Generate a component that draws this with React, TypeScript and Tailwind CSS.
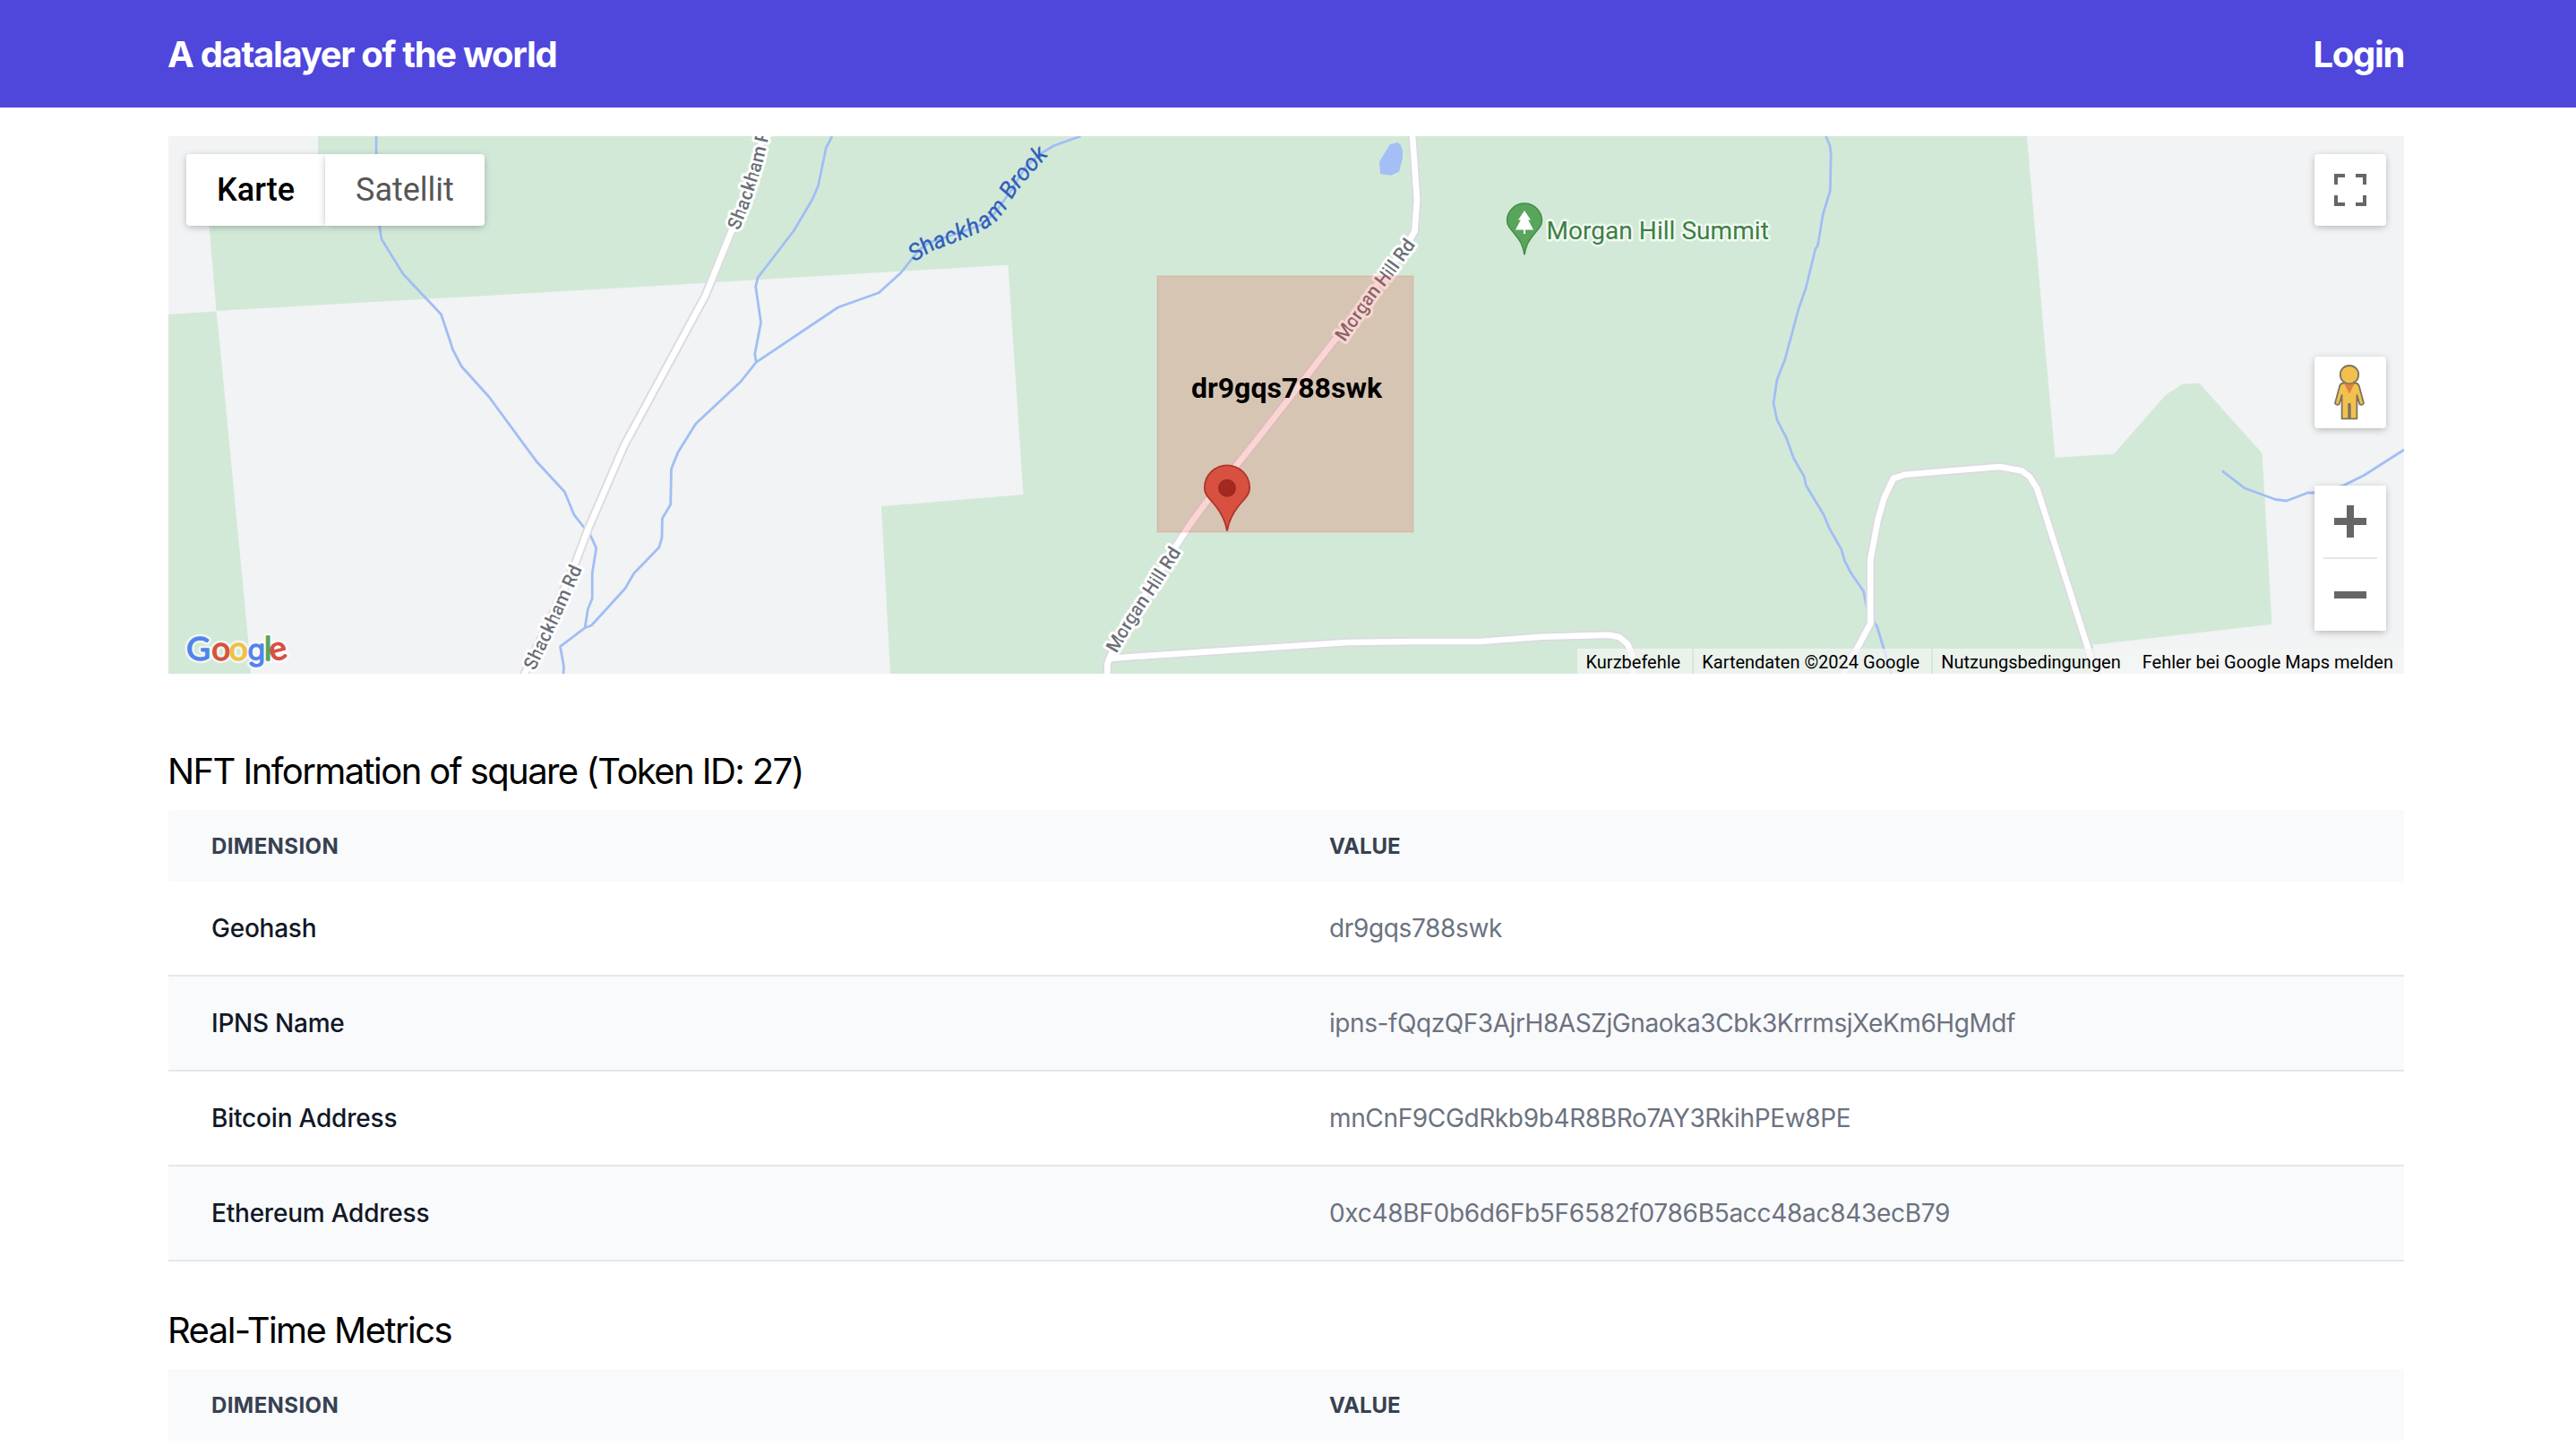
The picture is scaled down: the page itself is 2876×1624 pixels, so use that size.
import React from "react";

type Row = { name: string; value: string; nameClass: string; valueClass: string };

const nftRows: Row[] = [
  {
    name: "Geohash",
    value: "dr9gqs788swk",
    nameClass: "tracking-[-0.24px]",
    valueClass: "tracking-[-0.36px]",
  },
  {
    name: "IPNS Name",
    value: "ipns-fQqzQF3AjrH8ASZjGnaoka3Cbk3KrrmsjXeKm6HgMdf",
    nameClass: "tracking-[-0.24px]",
    valueClass: "tracking-[-0.42px]",
  },
  {
    name: "Bitcoin Address",
    value: "mnCnF9CGdRkb9b4R8BRo7AY3RkihPEw8PE",
    nameClass: "tracking-[-0.2px]",
    valueClass: "tracking-[-0.36px]",
  },
  {
    name: "Ethereum Address",
    value: "0xc48BF0b6d6Fb5F6582f0786B5acc48ac843ecB79",
    nameClass: "tracking-[-0.22px]",
    valueClass: "tracking-[-0.29px]",
  },
];

const forest = [
  "M188 351 L241.5 347.5 L245 380 L277 713 L280 752 H188 Z",
  "M355 152 V215 L231.5 222 L233.5 252 L241.5 347 L700 321 L1125.5 295.7 L1131 380 L1142.5 552 L1094 556 L984 565 L994 752 H2345 L2336.6 719.7 L2536.5 696.7 L2525.6 506 L2455.5 427.7 L2436.5 428.7 L2418 440.7 L2360 506.7 L2294.5 510.7 L2282.6 380 L2263 152 Z",
];

const streams = [
  "M420 152 L420 200 L423.7 252 L426 267 L450 305.7 L492.4 350.7 L502.3 380 L505.4 390 L515.3 409 L546 443 L598.7 514.7 L630.4 549 L641 574.7 L653 590 L659 597 L665.7 611.7 L661.2 640 V668 L656.3 680 L653.2 700",
  "M1206.7 152 L1176.8 162.5 L1164.3 170 L1146 185 L1128.6 213 L1110.7 238 L1095 251 L1070.5 260 L1037 271 L1026 279 L1018 289 L1005.8 304.5 L981.2 326.7 L935.7 343 L844.2 404.3 L827 426 L776.8 473 L757 504.7 L749.5 523.3 L748.7 563 L739.4 578.7 L739 600 L735.8 611 L707.7 640 L698 656.7 L660.4 698 L653.2 700.7 L625.5 721.7 L629.5 744 L629 752",
  "M929 152 L922.3 165 L913.4 207.7 L906.7 223 L886.6 257 L846 310 L843.7 320 L849.5 360 L842.8 395 L844.2 404",
  "M2038.4 152 L2042.9 162 L2044.2 172 L2043.3 213 L2035.3 239 L2029.5 274 L2026.8 278 L2016 322 L2008 345 L1992.9 401 L1984 423.7 L1980 450 L1984 468.7 L1995 490 L2002.3 511 L2014.3 532 L2016.3 541.7 L2036.2 574.7 L2042 589 L2055.7 613 L2059.5 626 L2066.8 640 L2080.6 660 L2085 682 L2092.8 694.7 L2095.5 699 L2103.5 725 L2111.6 752",
  "M2481 525.7 L2505.8 544.7 L2540.5 557.5 L2552.8 559 L2576.6 550 H2584 L2616.2 542 L2639.4 530.5 L2684 502",
];

const roads = [
  "M856 140 L851.8 152 L842 190 L829.5 225 L817 257 L787.5 330 L760.4 380 L697 497 L656.8 590 L640.7 633 L615 690 L592 738 L584 756",
  "M1576.8 148 L1582 223 L1579.5 258 L1569.6 275 L1493.8 375 L1400 495 L1380 520 L1346.5 561 L1328.7 585 L1312 611 L1272.9 672 L1248.3 712 L1239.4 733 L1236.3 741 V756",
  "M1239 735 L1264 733 L1505 717 L1580 716 L1652.7 716 L1668 714.7 L1721.6 710.7 L1796.2 708.7 L1807.7 711 L1817.3 719 L1821.9 730 L1824 756",
  "M2056 756 L2088.2 696 V625 L2096.6 580 L2103.5 556 L2113.9 534 L2127.3 529.7 L2180 525.3 L2232.6 521 L2257.4 525.5 L2265.8 532 L2274.2 545 L2330 720 L2341 756",
];

const roadLabels = [
  { id: "shackham-north", text: "Shackham Rd", d: "M818 255 L830 225 Q841 192 845 177 L858 120 V60" },
  { id: "shackham-south", text: "Shackham Rd", d: "M590 746 L594 738 L617 690 L642.7 633 L662 590" },
  { id: "morgan-south", text: "Morgan Hill Rd", d: "M1240 726 L1260.5 691 L1288 651 L1314 610 L1331 584" },
  { id: "morgan-north", text: "Morgan Hill Rd", d: "M1495 378 L1530 328 L1549 304 L1573 271 L1590 245" },
];

const googleLetters = [
  { char: "G", x: 208, color: "#5184ec", className: "" },
  { char: "o", x: 236.3, color: "#d85040", className: "" },
  { char: "o", x: 255.7, color: "#f1bf42", className: "" },
  { char: "g", x: 276.4, color: "#5184ec", className: "font-['Inter'] text-[32px]" },
  { char: "l", x: 294.8, color: "#58a55c", className: "" },
  { char: "e", x: 300.6, color: "#d85040", className: "" },
];

function GoogleMark() {
  const letters = (halo: boolean) =>
    googleLetters.map((l, i) => (
      <text
        key={i}
        x={l.x}
        y={736.5}
        fill={halo ? "#ffffff" : l.color}
        stroke={halo ? "#ffffff" : l.color}
        className={l.className}
        transform={l.char === "e" ? "rotate(-14 310 727)" : undefined}
      >
        {l.char}
      </text>
    ));
  return (
    <g className="font-['Lato','Liberation_Sans',sans-serif] text-[37px]" strokeLinejoin="round">
      <g aria-hidden="true" strokeWidth="6.5" opacity="0.65">
        {letters(true)}
      </g>
      <g strokeWidth="1.3">{letters(false)}</g>
    </g>
  );
}

function MapCanvas() {
  return (
    <svg className="absolute inset-0 h-full w-full" viewBox="188 152 2496 600">
      <rect x="188" y="152" width="2496" height="600" fill="#f1f3f4" />
      {forest.map((d) => (
        <path key={d} d={d} fill="#d3e9d8" />
      ))}
      <path
        d="M1551.8 161 L1560.7 159 L1564 162 L1566 169 L1566 176 L1562 191.7 L1553 195.7 L1541 194.3 L1540 180.7 Z"
        fill="#a3bff5"
      />
      <g fill="none" stroke="#a1bef4" strokeWidth="2.8" strokeLinejoin="round">
        {streams.map((d) => (
          <path key={d} d={d} />
        ))}
      </g>
      <g fill="none" stroke="#dadce0" strokeWidth="10.5" strokeLinejoin="round">
        {roads.map((d) => (
          <path key={d} d={d} />
        ))}
      </g>
      <g fill="none" stroke="#ffffff" strokeWidth="6.6" strokeLinejoin="round">
        {roads.map((d) => (
          <path key={d} d={d} />
        ))}
      </g>

      <g
        className="font-['Roboto',sans-serif] text-[21px] font-medium tracking-[-0.3px] [paint-order:stroke]"
        fill="#6a6e77"
        stroke="#ffffff"
        strokeWidth="6"
        strokeLinejoin="round"
      >
        {roadLabels.map((l) => (
          <g key={l.id}>
            <path id={l.id} d={l.d} fill="none" stroke="none" />
            <text dy="7.5">
              <textPath href={`#${l.id}`}>{l.text}</textPath>
            </text>
          </g>
        ))}
      </g>
      <path id="brook" d="M1016 285 L1035 273 L1066 261 L1090 251 Q1105 243 1113 232 L1126 211 L1143 190 L1172 158" fill="none" />
      <text dy="9" className="font-['Roboto',sans-serif] text-[26px] tracking-[0.35px] italic" fill="#2f5fb9" stroke="#2f5fb9" strokeWidth="0.3">
        <textPath href="#brook">Shackham Brook</textPath>
      </text>

      <path
        d="M1702 284.5 C1700 272 1696.5 268 1690.5 260.5 C1685.5 254.5 1682.5 251 1682.5 246.5 A19.5 19.5 0 0 1 1721.5 246.5 C1721.5 251 1718.5 254.5 1713.5 260.5 C1707.5 268 1704 272 1702 284.5 Z"
        fill="#58a55c"
        stroke="#458a49"
        strokeWidth="1.4"
      />
      <path
        d="M1702 235 L1709 245.5 H1706.2 L1712 256.5 H1703 V261 H1701 V256.5 H1692 L1697.8 245.5 H1695 Z"
        fill="#ffffff"
      />
      <text
        x="1726.5"
        y="266.5"
        className="font-['Roboto',sans-serif] text-[28px] tracking-[0.05px] [paint-order:stroke]"
        fill="#3c8043"
        stroke="#ffffff"
        strokeOpacity="0.7"
        strokeWidth="5"
        strokeLinejoin="round"
      >
        Morgan Hill Summit
      </text>

      <rect
        x="1292"
        y="308"
        width="286"
        height="286"
        fill="#ea4335"
        fillOpacity="0.22"
        stroke="#ea4335"
        strokeOpacity="0.15"
        strokeWidth="1.4"
      />
      <path
        d="M1370 592.5 C1367.8 580 1363.5 572.5 1357 564.5 C1350 556 1344.8 552 1344.8 544.5 A25.2 25.2 0 0 1 1395.2 544.5 C1395.2 552 1390 556 1383 564.5 C1376.5 572.5 1372.2 580 1370 592.5 Z"
        fill="#d85040"
        stroke="#b0342a"
        strokeWidth="1.8"
      />
      <circle cx="1370" cy="544.8" r="10" fill="#a3281f" />
      <text
        x="1436.5"
        y="443.5"
        textAnchor="middle"
        className="font-['Roboto',sans-serif] text-[32px] font-bold"
        fill="#000000"
      >
        dr9gqs788swk
      </text>
      <GoogleMark />
    </svg>
  );
}

function Pegman() {
  return (
    <svg className="-mt-0.5 h-16 w-10" viewBox="0 0 40 64">
      <g fill="#f3c04d" stroke="#7b7460" strokeWidth="1.8" strokeLinejoin="round">
        <path d="M13.5 22.6 H26.5 Q30 22.8 30.8 25.8 L36 45 Q35 47.6 31.6 46.4 L28.4 36 V62.4 H20.8 V46 H19.2 V62.4 H11.6 V36 L8.4 46.4 Q5 47.6 4 45 L9.2 25.8 Q10 22.8 13.5 22.6 Z" />
        <circle cx="20" cy="13.2" r="10.2" />
      </g>
      <path d="M13.8 22.2 Q20 25.6 26.2 22.2 L20 34.5 Z" fill="#d88245" />
    </svg>
  );
}

const controlShadow = "shadow-[0_2px_8px_-1px_rgba(0,0,0,0.3)]";

function MapControls() {
  return (
    <div className="absolute inset-0 flex flex-col justify-between font-['Roboto',sans-serif]">
      <div className="flex items-start justify-between p-5">
        <div className="flex h-20 text-[36px] leading-none">
          <button className={`h-20 rounded-l-[4px] bg-white px-[34px] font-medium text-black ${controlShadow}`}>
            Karte
          </button>
          <button className={`h-20 rounded-r-[4px] bg-white px-[34px] text-[#565656] ${controlShadow}`}>
            Satellit
          </button>
        </div>
        <div className="flex flex-col">
          <button className={`flex size-20 items-center justify-center rounded-[4px] bg-white ${controlShadow}`}>
            <svg className="size-9" viewBox="0 0 18 18" fill="#666666">
              <path d="M0 0v6h2V2h4V0H0zM16 0h-4v2h4v4h2V0h-2zM16 16h-4v2h6v-6h-2v4zM2 12H0v6h6v-2H2v-4z" />
            </svg>
          </button>
          <button className={`mt-[146px] flex size-20 items-center justify-center rounded-[4px] bg-white pr-0.5 ${controlShadow}`}>
            <Pegman />
          </button>
          <div className={`mt-16 flex h-[162px] w-20 flex-col items-center rounded-[2px] bg-white ${controlShadow}`}>
            <button className="flex h-20 w-full items-center justify-center">
              <svg className="size-9" viewBox="0 0 18 18" fill="#666666">
                <path d="M18 7h-7V0H7v7H0v4h7v7h4v-7h7z" />
              </svg>
            </button>
            <div className="h-0.5 w-15 bg-[#e6e6e6]" />
            <button className="flex h-20 w-full items-center justify-center">
              <svg className="size-9" viewBox="0 0 18 18" fill="#666666">
                <path d="M0 7h18v4H0z" />
              </svg>
            </button>
          </div>
        </div>
      </div>
      <div className="flex h-7 shrink-0 justify-end whitespace-nowrap text-[20px] leading-[30px] text-black">
        <span className="mr-0.5 bg-[#f5f5f5]/70 pr-[13px] pl-[10px]">Kurzbefehle</span>
        <span className="mr-0.5 bg-[#f5f5f5]/70 pr-[13px] pl-[9px]">Kartendaten ©2024 Google</span>
        <span className="bg-[#f5f5f5]/70 pr-3 pl-[9px]">Nutzungsbedingungen</span>
        <span className="bg-[#f5f5f5]/70 px-3">Fehler bei Google Maps melden</span>
      </div>
    </div>
  );
}

function DataTable({ rows }: { rows: Row[] }) {
  return (
    <div>
      <div className="grid h-20 grid-cols-2 items-center bg-gray-50 pt-0.5 text-[24px] font-bold text-[#374151]">
        <div className="px-12 tracking-[0.4px]">DIMENSION</div>
        <div className="px-12 tracking-normal">VALUE</div>
      </div>
      {rows.map((r, i) => (
        <div
          key={r.name}
          className={`grid h-[106px] grid-cols-2 items-center border-b-2 border-[#e5e7eb] text-[28px] ${
            i % 2 === 1 ? "bg-gray-50" : "bg-white"
          }`}
        >
          <div className={`px-12 font-medium text-[#111827] ${r.nameClass}`}>{r.name}</div>
          <div className={`px-12 text-[#6b7280] ${r.valueClass}`}>{r.value}</div>
        </div>
      ))}
    </div>
  );
}

export default function App() {
  return (
    <div className="h-[1624px] w-[2876px] overflow-hidden bg-white font-['Inter',sans-serif]">
      <header className="flex h-[120px] items-center justify-between bg-[#4f46dc] pt-0.5 pr-48 pl-[187px] text-[40px] font-bold tracking-[-1.32px] text-white">
        <h1>A datalayer of the world</h1>
        <a>Login</a>
      </header>
      <main className="mr-[192px] ml-[188px]">
        <section className="relative mt-8 h-[600px] overflow-hidden">
          <MapCanvas />
          <MapControls />
        </section>
        <h2 className="mt-[81px] mb-[15px] -ml-px text-[40px] leading-[56px] tracking-[-1.58px] text-black">
          NFT Information of square (Token ID: 27)
        </h2>
        <DataTable rows={nftRows} />
        <h2 className="mt-[49px] mb-[15px] -ml-px text-[40px] leading-[56px] tracking-[-1.55px] text-black">Real-Time Metrics</h2>
        <DataTable rows={[]} />
      </main>
    </div>
  );
}
